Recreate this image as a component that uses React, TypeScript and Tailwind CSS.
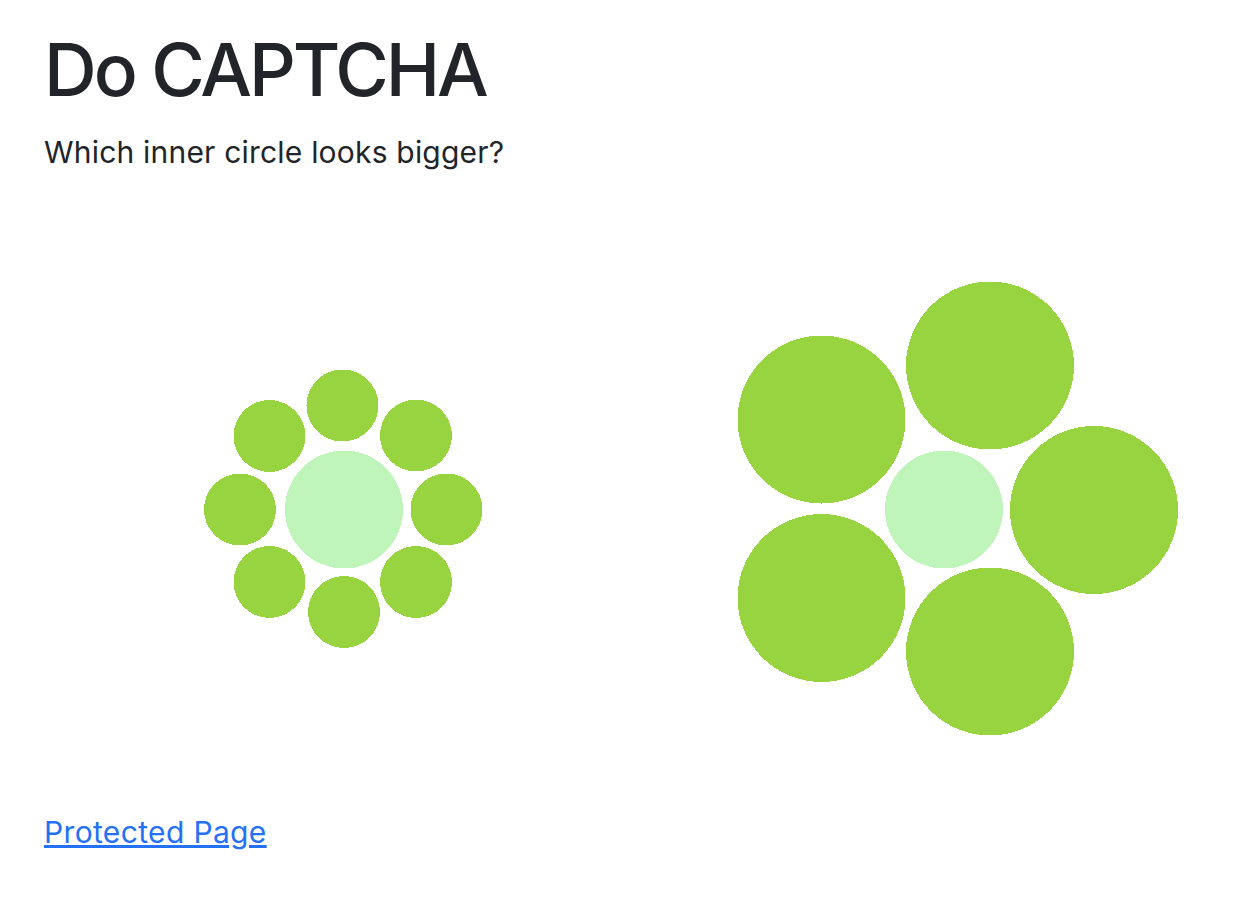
import React from "react";

const small: [number, number][] = [
  [342.5, 404.5],
  [416, 434.5],
  [446.5, 508.5],
  [416, 581],
  [344, 611],
  [269.5, 581],
  [240, 508.5],
  [269.5, 435],
];

const big: [number, number][] = [
  [1094, 509],
  [990, 364.5],
  [821.5, 418.5],
  [821.5, 597],
  [990, 650.5],
];

export default function App() {
  return (
    <div
      className="min-h-[900px] bg-white px-[44px] pt-[25px] text-[#212529]"
      style={{ fontFamily: "Inter, 'Noto Sans', 'Liberation Sans', sans-serif" }}
    >
      <h1 className="m-0 text-[73px] font-medium leading-[90px] tracking-[-3px]">Do CAPTCHA</h1>
      <p className="mt-[15px] mb-[30px] text-[30px] leading-[45px] tracking-[0.2px]">
        Which inner circle looks bigger?
      </p>
      <svg
        width={1166}
        height={605}
        viewBox="44 204 1166 605"
        className="block"
        shapeRendering="crispEdges"
      >
        <circle cx={344} cy={508.5} r={59} fill="#bff4ba" />
        {small.map(([x, y], i) => (
          <circle key={`s${i}`} cx={x} cy={y} r={36} fill="#97d43f" />
        ))}
        <circle cx={944} cy={508.5} r={59} fill="#bff4ba" />
        {big.map(([x, y], i) => (
          <circle key={`b${i}`} cx={x} cy={y} r={84} fill="#97d43f" />
        ))}
      </svg>
      <a href="#" className="text-[30px] leading-[45px] tracking-[0.35px] text-[#2571f5] underline">
        Protected Page
      </a>
    </div>
  );
}
